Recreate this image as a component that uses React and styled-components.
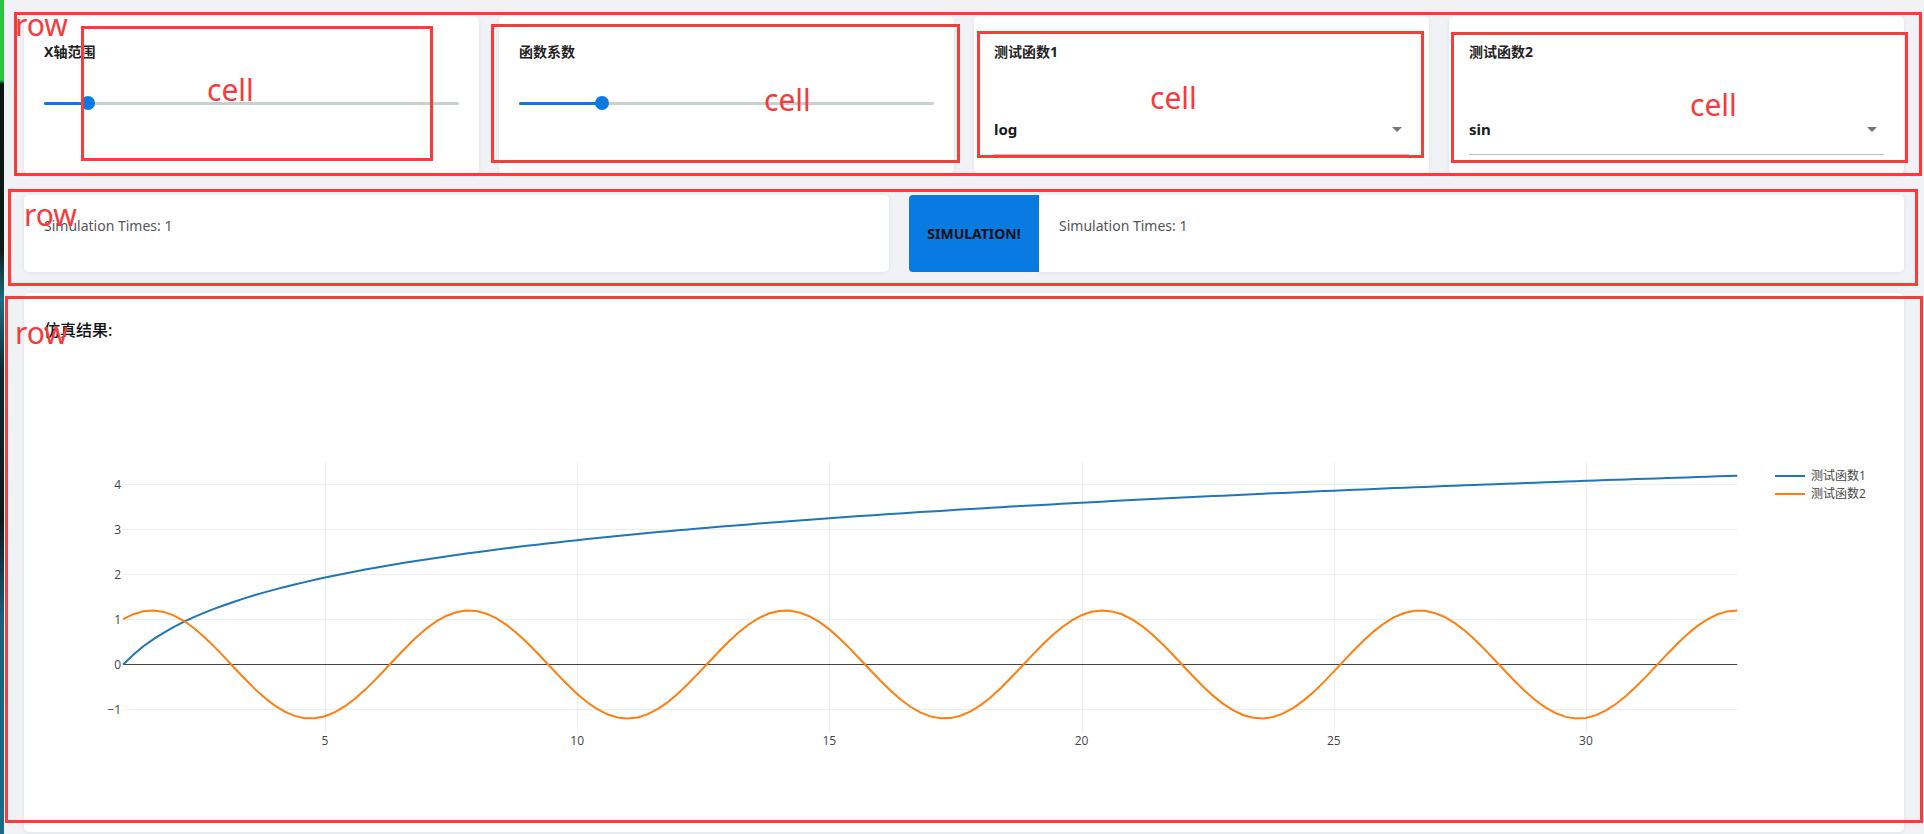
import React from 'react';
import styled, { createGlobalStyle } from 'styled-components';

const GlobalStyle = createGlobalStyle`
  html, body {
    margin: 0;
    padding: 0;
    overflow: hidden;
    background: #f1f2f6;
  }
  body {
    font-family: "Noto Sans", "Noto Sans CJK SC", sans-serif;
    color: #222;
  }
  * { box-sizing: border-box; }
`;

const Shell = styled.div`
  position: relative;
  display: flex;
  width: 1924px;
  height: 834px;
  overflow: hidden;
`;

// sliver of the neighbouring window on the far left
const EdgeStrip = styled.div`
  flex: 0 0 4px;
  background: linear-gradient(
    #2bc540 0px, #2bc540 80px,
    #0c1613 84px, #0f1c18 250px,
    #1b6e84 300px, #0e2a2f 370px,
    #0d1917 520px, #17627a 620px,
    #1a6b86 834px
  );
`;

const Page = styled.main`
  flex: 1;
  display: flex;
  flex-direction: column;
  gap: 21px;
  padding: 16px 20px 0;
`;

const Row = styled.section`
  display: flex;
  gap: ${p => p.$gap}px;
  min-height: ${p => p.$height || 0}px;
`;

const Card = styled.div`
  flex: 1 1 0;
  min-width: 0;
  background: #fff;
  border-radius: ${p => p.$radius || '5px'};
  box-shadow: 0 1px 4px rgba(20, 30, 60, 0.07);
  padding: ${p => p.$pad};
`;

const FieldLabel = styled.div`
  font-size: 14px;
  font-weight: 700;
  line-height: 22px;
  color: #222;
`;

const Slider = styled.div`
  position: relative;
  height: 30px;
  margin-top: 25px;
`;

const Rail = styled.div`
  position: absolute;
  left: 0;
  right: 0;
  top: 50%;
  height: 3px;
  margin-top: -1.5px;
  background: #c9d0d0;
  border-radius: 2px;
`;

const Fill = styled.div`
  position: absolute;
  left: 0;
  top: 50%;
  height: 3px;
  margin-top: -1.5px;
  background: #0b79e3;
  border-radius: 2px;
`;

const Thumb = styled.div`
  position: absolute;
  top: 50%;
  width: 14px;
  height: 14px;
  margin: -7px 0 0 -7px;
  border-radius: 50%;
  background: #0b79e3;
`;

const SelectBox = styled.div`
  display: flex;
  align-items: center;
  justify-content: space-between;
  height: 51px;
  margin-top: 41px;
  border-bottom: 1px solid #bdbdbd;
`;

const SelectValue = styled.span`
  font-size: 15px;
  font-weight: 700;
  color: #1a1a1a;
`;

const StatText = styled.div`
  font-size: 14px;
  line-height: 22px;
  color: #555;
`;

const SimButton = styled.button`
  flex: 0 0 130px;
  margin-left: 20px;
  border: none;
  border-radius: 4px 0 0 4px;
  background: #0a7ae3;
  color: #111;
  font-family: "Noto Sans", sans-serif;
  font-size: 14px;
  font-weight: 700;
  text-transform: uppercase;
  cursor: pointer;
`;

const ResultTitle = styled.div`
  font-size: 16px;
  font-weight: 500;
  line-height: 24px;
  color: #111;
`;

const ChartSvg = styled.svg`
  display: block;
  margin-top: 8px;
  font-family: "Open Sans", "Noto Sans CJK SC", sans-serif;
`;

const Overlay = styled.div`
  position: absolute;
  inset: 0;
  pointer-events: none;
`;

const NoteBox = styled.div`
  position: absolute;
  left: ${p => p.$x}px;
  top: ${p => p.$y}px;
  width: ${p => p.$w}px;
  height: ${p => p.$h}px;
  border: 3px solid #fb3a3a;
`;

const NoteText = styled.span`
  position: absolute;
  left: ${p => p.$x}px;
  top: ${p => p.$base - 27}px;
  font-family: "Noto Sans", sans-serif;
  font-size: 30px;
  line-height: 30px;
  color: #f53b3d;
`;

function RangeControl({ label, value }) {
  return (
    <Card $pad="25px 20px 0">
      <FieldLabel>{label}</FieldLabel>
      <Slider>
        <Rail />
        <Fill style={{ width: `${value}%` }} />
        <Thumb style={{ left: `${value}%` }} />
      </Slider>
    </Card>
  );
}

function SelectControl({ label, value }) {
  return (
    <Card $pad="25px 20px 0">
      <FieldLabel>{label}</FieldLabel>
      <SelectBox>
        <SelectValue>{value}</SelectValue>
        <svg width="24" height="24" viewBox="0 0 24 24">
          <path d="M7 10l5 5 5-5z" fill="#757575" />
        </svg>
      </SelectBox>
    </Card>
  );
}

const X0 = 79.2;
const XU = 50.44;
const Y0 = 314.5;
const YU = 45;
const sx = x => X0 + (x - 1) * XU;
const sy = y => Y0 - y * YU;
const crisp = v => Math.round(v) + 0.5;

function linePath(fn) {
  const pts = [];
  for (let i = 0; i <= 160; i++) {
    const x = 1 + i * 0.2;
    pts.push(`${i ? 'L' : 'M'}${sx(x).toFixed(1)},${sy(fn(x)).toFixed(1)}`);
  }
  return pts.join('');
}

function ResultChart() {
  const yTicks = [4, 3, 2, 1, 0, -1];
  const xTicks = [5, 10, 15, 20, 25, 30];
  const right = sx(33);
  return (
    <ChartSvg width="100%" height="462">
      {yTicks.filter(v => v !== 0).map(v => (
        <line key={v} x1={X0} x2={right} y1={sy(v)} y2={sy(v)} stroke="#eee" strokeWidth="1" />
      ))}
      {xTicks.map(v => (
        <line key={v} x1={crisp(sx(v))} x2={crisp(sx(v))} y1={112} y2={382} stroke="#eee" strokeWidth="1" />
      ))}
      <line x1={X0} x2={right} y1={sy(0)} y2={sy(0)} stroke="#444" strokeWidth="1" />
      <path d={linePath(x => 1.2 * Math.log(x))} fill="none" stroke="#1f77b4" strokeWidth="2" />
      <path d={linePath(x => 1.2 * Math.sin(x))} fill="none" stroke="#ff7f0e" strokeWidth="2" />
      {yTicks.map(v => (
        <text key={v} x={77} y={sy(v) + 4} textAnchor="end" fontSize="12" fill="#444">
          {v < 0 ? `\u2212${-v}` : v}
        </text>
      ))}
      {xTicks.map(v => (
        <text key={v} x={sx(v)} y={395} textAnchor="middle" fontSize="12" fill="#444">
          {v}
        </text>
      ))}
      <g>
        <line x1={1731} x2={1761} y1={126} y2={126} stroke="#1f77b4" strokeWidth="2" />
        <text x={1767} y={130} fontSize="12" fill="#444">测试函数1</text>
        <line x1={1731} x2={1761} y1={144} y2={144} stroke="#ff7f0e" strokeWidth="2" />
        <text x={1767} y={148} fontSize="12" fill="#444">测试函数2</text>
      </g>
    </ChartSvg>
  );
}

const boxes = [
  { x: 14, y: 12, w: 1908, h: 164 },
  { x: 8, y: 189, w: 1910, h: 97 },
  { x: 5, y: 296, w: 1918, h: 527 },
  { x: 81, y: 26, w: 352, h: 135 },
  { x: 491, y: 24, w: 469, h: 139 },
  { x: 977, y: 31, w: 447, h: 127 },
  { x: 1451, y: 32, w: 457, h: 131 },
];

const notes = [
  { t: 'row', x: 15, b: 37 },
  { t: 'row', x: 24, b: 227 },
  { t: 'row', x: 15, b: 345 },
  { t: 'cell', x: 207, b: 102 },
  { t: 'cell', x: 764, b: 112 },
  { t: 'cell', x: 1150, b: 110 },
  { t: 'cell', x: 1690, b: 117 },
];

export default function App() {
  return (
    <Shell>
      <GlobalStyle />
      <EdgeStrip />
      <Page>
        <Row $gap={20} $height={158}>
          <RangeControl label="X轴范围" value={10.6} />
          <RangeControl label="函数系数" value={20} />
          <SelectControl label="测试函数1" value="log" />
          <SelectControl label="测试函数2" value="sin" />
        </Row>
        <Row $gap={0} $height={77}>
          <Card $pad="20px">
            <StatText>Simulation Times: 1</StatText>
          </Card>
          <SimButton>Simulation!</SimButton>
          <Card $pad="20px" $radius="0 5px 5px 0">
            <StatText>Simulation Times: 1</StatText>
          </Card>
        </Row>
        <Row $gap={0}>
          <Card $pad="25px 20px 20px">
            <ResultTitle>仿真结果:</ResultTitle>
            <ResultChart />
          </Card>
        </Row>
      </Page>
      <Overlay>
        {boxes.map((b, i) => (
          <NoteBox key={i} $x={b.x} $y={b.y} $w={b.w} $h={b.h} />
        ))}
        {notes.map((n, i) => (
          <NoteText key={i} $x={n.x} $base={n.b}>{n.t}</NoteText>
        ))}
      </Overlay>
    </Shell>
  );
}
